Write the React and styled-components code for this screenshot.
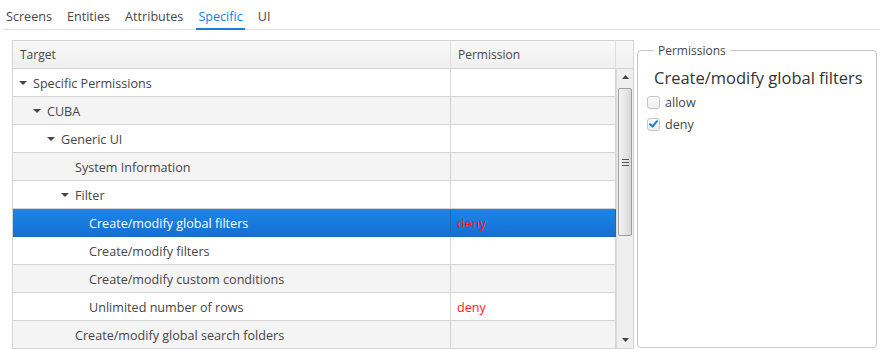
import React from "react";
import styled, { createGlobalStyle } from "styled-components";

const GlobalStyle = createGlobalStyle`
  body {
    margin: 0;
    background: #fff;
    font-family: "Open Sans", "Noto Sans", sans-serif;
    font-size: 12.6px;
    color: #464646;
  }
`;

const tabs = ["Screens", "Entities", "Attributes", "Specific", "UI"];

const rows = [
  { label: "Specific Permissions", level: 0, open: true },
  { label: "CUBA", level: 1, open: true },
  { label: "Generic UI", level: 2, open: true },
  { label: "System Information", level: 3 },
  { label: "Filter", level: 3, open: true },
  { label: "Create/modify global filters", level: 4, perm: "deny", selected: true },
  { label: "Create/modify filters", level: 4 },
  { label: "Create/modify custom conditions", level: 4 },
  { label: "Unlimited number of rows", level: 4, perm: "deny" },
  { label: "Create/modify global search folders", level: 3 },
];

function App() {
  return (
    <Page>
      <GlobalStyle />
      <TabBar>
        {tabs.map((t) => (
          <Tab key={t} active={t === "Specific"}>{t}</Tab>
        ))}
      </TabBar>
      <Content>
        <Table>
          <HeadRow>
            <HeadCell>Target</HeadCell>
            <HeadCell>Permission</HeadCell>
            <HeadCell />
          </HeadRow>
          <Body>
            <Rows>
              {rows.map((r, i) => (
                <Row key={r.label} odd={i % 2 === 1} selected={r.selected}>
                  <Cell selected={r.selected}>
                    <TreeLabel level={r.level}>
                      {r.open ? <Caret selected={r.selected} /> : <CaretSpace />}
                      {r.label}
                    </TreeLabel>
                  </Cell>
                  <Cell selected={r.selected}>{r.perm && <Deny>{r.perm}</Deny>}</Cell>
                </Row>
              ))}
            </Rows>
            <Scrollbar>
              <ScrollArrow>
                <svg width="7" height="4" viewBox="0 0 7 4"><path d="M0 4 L3.5 0 L7 4 Z" fill="#444" /></svg>
              </ScrollArrow>
              <Track>
                <Thumb>
                  <Grip />
                  <Grip />
                  <Grip />
                </Thumb>
              </Track>
              <ScrollArrow>
                <svg width="7" height="4" viewBox="0 0 7 4"><path d="M0 0 L7 0 L3.5 4 Z" fill="#444" /></svg>
              </ScrollArrow>
            </Scrollbar>
          </Body>
        </Table>
        <Panel>
          <Legend>Permissions</Legend>
          <PanelTitle>Create/modify global filters</PanelTitle>
          <CheckRow>
            <Box />
            allow
          </CheckRow>
          <CheckRow>
            <Box>
              <svg width="9" height="8" viewBox="0 0 9 8">
                <path d="M1 4.2 L3.4 6.5 L8 1.2" fill="none" stroke="#197de1" strokeWidth="2" strokeLinecap="round" strokeLinejoin="round" />
              </svg>
            </Box>
            deny
          </CheckRow>
        </Panel>
      </Content>
    </Page>
  );
}

export default App;

const Page = styled.div`
  width: 880px;
  height: 350px;
  overflow: hidden;
`;

const TabBar = styled.div`
  display: flex;
  align-items: flex-end;
  gap: 11px;
  height: 30px;
  margin-left: 3px;
  padding-left: 1px;
  border-bottom: 1px solid #dfdfdf;
  box-sizing: border-box;
`;

const Tab = styled.div`
  padding: 0 2px 2px;
  line-height: 18px;
  color: ${(p) => (p.active ? "#197de1" : "#474747")};
  border-bottom: 2px solid ${(p) => (p.active ? "#197de1" : "transparent")};
  margin-bottom: -1px;
`;

const Content = styled.div`
  display: flex;
  align-items: flex-start;
  padding: 10px 0 0 12px;
`;

const Table = styled.div`
  flex: none;
  width: 622px;
  height: 309px;
  border: 1px solid #d4d4d4;
  box-sizing: border-box;
  display: flex;
  flex-direction: column;
  overflow: hidden;
`;

const HeadRow = styled.div`
  display: grid;
  grid-template-columns: 438px 165px 1fr;
  height: 28px;
  flex: none;
  background: linear-gradient(#f8f8f8, #f0f0f0);
  border-bottom: 1px solid #d4d4d4;
  box-sizing: border-box;
`;

const HeadCell = styled.div`
  display: flex;
  align-items: center;
  padding-left: 7px;
  font-size: 12px;
  color: #464646;
  border-right: 1px solid #dcdcdc;
  &:last-child {
    border-right: none;
  }
`;

const Body = styled.div`
  display: flex;
  flex: 1;
  min-height: 0;
`;

const Rows = styled.div`
  width: 603px;
  flex: none;
`;

const Row = styled.div`
  display: grid;
  grid-template-columns: 438px 165px;
  height: 28px;
  box-sizing: border-box;
  border-bottom: 1px solid ${(p) => (p.selected ? "#1d69b4" : "#d4d4d4")};
  background: ${(p) =>
    p.selected
      ? "linear-gradient(#1b87e3, #166ed5)"
      : p.odd
      ? "#f4f4f4"
      : "#fff"};
  color: ${(p) => (p.selected ? "#fff" : "#464646")};
`;

const Cell = styled.div`
  display: flex;
  align-items: center;
  padding: 1px 0 0 6px;
  border-right: 1px solid ${(p) => (p.selected ? "#1d69b4" : "#d4d4d4")};
`;

const TreeLabel = styled.div`
  display: flex;
  align-items: center;
  padding-left: ${(p) => p.level * 14}px;
  white-space: nowrap;
`;

const Caret = styled.span`
  width: 0;
  height: 0;
  border-left: 4px solid transparent;
  border-right: 4px solid transparent;
  border-top: 4px solid ${(p) => (p.selected ? "#fff" : "#464646")};
  margin-right: 6px;
`;

const CaretSpace = styled.span`
  width: 14px;
`;

const Deny = styled.span`
  color: #ff1a1a;
`;

const Scrollbar = styled.div`
  width: 17px;
  flex: none;
  display: flex;
  flex-direction: column;
  background: #efefef;
  border-left: 1px solid #dadada;
  box-sizing: border-box;
`;

const ScrollArrow = styled.div`
  height: 16px;
  display: flex;
  align-items: center;
  justify-content: center;
  flex: none;
`;

const Track = styled.div`
  flex: 1;
  padding: 3px 1px 0;
`;

const Thumb = styled.div`
  height: 148px;
  border: 1px solid #9d9d9d;
  border-radius: 2px;
  background: linear-gradient(90deg, #f4f4f4, #d8d8d8);
  display: flex;
  flex-direction: column;
  justify-content: center;
  align-items: center;
  gap: 2px;
  box-sizing: border-box;
`;

const Grip = styled.div`
  width: 7px;
  height: 1px;
  background: #555;
`;

const Panel = styled.fieldset`
  flex: none;
  margin: 2px 0 0 3px;
  width: 240px;
  min-width: 0;
  height: 306px;
  box-sizing: border-box;
  border: 1px solid #c5c5c5;
  border-radius: 4px;
  padding: 0 9px;
`;

const Legend = styled.legend`
  font-size: 12px;
  color: #474747;
  padding: 0 4px;
  margin-left: 7px;
`;

const PanelTitle = styled.div`
  font-size: 16.5px;
  color: #333;
  white-space: nowrap;
  margin: 7px 0 2px 7px;
`;

const CheckRow = styled.div`
  display: flex;
  align-items: center;
  height: 22px;
  color: #464646;
`;

const Box = styled.span`
  width: 13px;
  height: 13px;
  box-sizing: border-box;
  border: 1px solid #c5c5c5;
  border-radius: 3px;
  background: linear-gradient(#fafafa, #efefef);
  margin-right: 5px;
  display: flex;
  align-items: center;
  justify-content: center;
`;
